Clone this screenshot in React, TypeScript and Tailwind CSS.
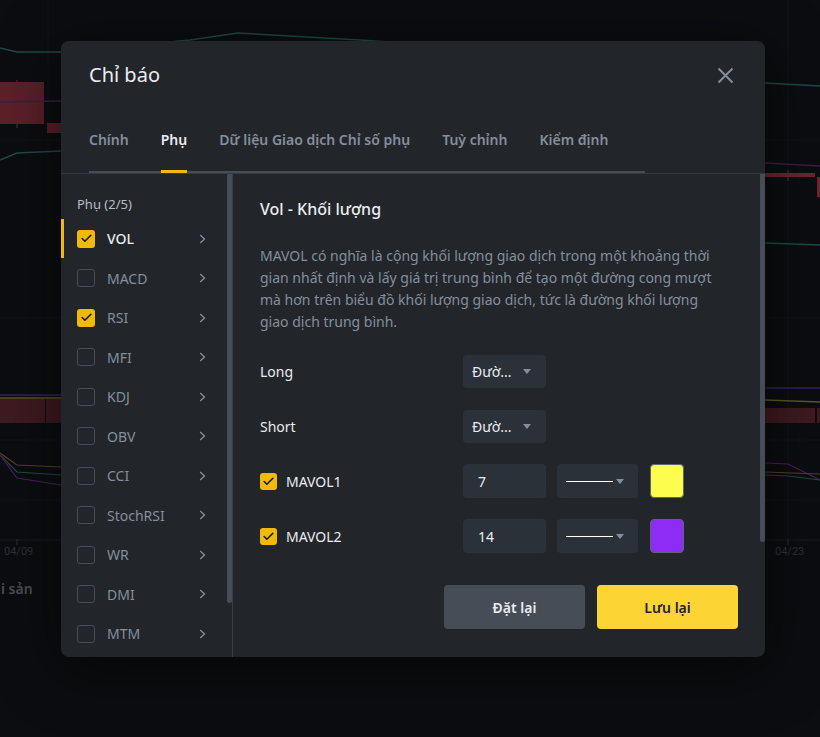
import { Check } from 'lucide-react'

const items = [
  { name: 'VOL', checked: true, active: true },
  { name: 'MACD', checked: false },
  { name: 'RSI', checked: true },
  { name: 'MFI', checked: false },
  { name: 'KDJ', checked: false },
  { name: 'OBV', checked: false },
  { name: 'CCI', checked: false },
  { name: 'StochRSI', checked: false },
  { name: 'WR', checked: false },
  { name: 'DMI', checked: false },
  { name: 'MTM', checked: false },
]

const tabs = ['Chính', 'Phụ', 'Dữ liệu Giao dịch Chỉ số phụ', 'Tuỳ chỉnh', 'Kiểm định']

function ChartBackground() {
  return (
    <svg className="absolute inset-0" width="820" height="737" viewBox="0 0 820 737">
      <rect width="820" height="737" fill="#0b0d10" />
      {/* faint grid */}
      <g stroke="#12151a" strokeWidth="1">
        <line x1="0" y1="140" x2="820" y2="140" />
        <line x1="0" y1="318" x2="820" y2="318" />
        <line x1="0" y1="440" x2="820" y2="440" />
        <line x1="0" y1="500" x2="820" y2="500" />
        <line x1="48" y1="0" x2="48" y2="540" />
        <line x1="788" y1="0" x2="788" y2="540" />
      </g>
      <line x1="0" y1="540" x2="820" y2="540" stroke="#1a1d22" />
      {/* top teal line */}
      <polyline points="0,48 17,52 61,52 190,40 238,33 360,40 420,44" fill="none" stroke="#1f4a4a" strokeWidth="1.5" />
      <polyline points="765,83 820,86" fill="none" stroke="#1f4a4a" strokeWidth="1.5" />
      {/* left candles */}
      <line x1="17" y1="80" x2="17" y2="128" stroke="#6e2530" />
      <rect x="0" y="82" width="44" height="42" fill="#5c2029" />
      <rect x="47" y="123" width="14" height="10" fill="#5c2029" />
      <line x1="0" y1="102" x2="61" y2="101" stroke="#3e1d4a" strokeWidth="1.5" />
      <polyline points="0,160 17,153 61,151" fill="none" stroke="#1f4a4a" strokeWidth="1.5" />
      {/* right candles */}
      <line x1="765" y1="163" x2="820" y2="166" stroke="#3e1d4a" strokeWidth="1.5" />
      <rect x="765" y="173" width="50" height="4" fill="#6e2530" />
      <line x1="788" y1="170" x2="788" y2="181" stroke="#6e2530" />
      <rect x="817" y="177" width="3" height="20" fill="#6e2530" />
      <line x1="765" y1="243" x2="820" y2="245" stroke="#1f4a4a" strokeWidth="1.5" />
      {/* volume area */}
      <line x1="0" y1="395" x2="61" y2="395" stroke="#3a1f6e" strokeWidth="1.5" />
      <line x1="765" y1="388" x2="820" y2="388" stroke="#3a1f6e" strokeWidth="1.5" />
      <line x1="0" y1="398" x2="61" y2="398" stroke="#5d5a1e" strokeWidth="1.5" />
      <line x1="765" y1="400" x2="820" y2="402" stroke="#5d5a1e" strokeWidth="1.5" />
      <rect x="0" y="399" width="45" height="24" fill="#3f1a21" />
      <rect x="46" y="399" width="15" height="24" fill="#3f1a21" />
      <rect x="765" y="408" width="50" height="15" fill="#3f1a21" />
      <rect x="817" y="408" width="3" height="15" fill="#3f1a21" />
      {/* lower lines */}
      <polyline points="0,453 17,465 61,467" fill="none" stroke="#5a4020" strokeWidth="1.2" />
      <polyline points="0,455 17,472 61,475" fill="none" stroke="#1f4a4a" strokeWidth="1.2" />
      <polyline points="0,455 17,478 61,485" fill="none" stroke="#4a1f5a" strokeWidth="1.2" />
      <polyline points="765,463 788,464 820,480" fill="none" stroke="#4a1f5a" strokeWidth="1.2" />
      <polyline points="765,472 820,474" fill="none" stroke="#5a4020" strokeWidth="1.2" />
      <polyline points="765,475 788,476 820,480" fill="none" stroke="#1f4a4a" strokeWidth="1.2" />
      {/* axis */}
      <line x1="17" y1="539" x2="17" y2="545" stroke="#2a2e34" />
      <line x1="788" y1="539" x2="788" y2="545" stroke="#2a2e34" />
      <text x="4" y="555" fill="#2e3238" fontSize="11" fontFamily="Roboto, sans-serif">04/09</text>
      <text x="775" y="555" fill="#2e3238" fontSize="11" fontFamily="Roboto, sans-serif">04/23</text>
      <text x="1" y="594" fill="#4a4f57" fontSize="14" fontWeight="600" fontFamily="'Noto Sans', sans-serif">i sản</text>
    </svg>
  )
}

function Caret() {
  return (
    <svg width="8" height="5" viewBox="0 0 8 5">
      <path d="M0 0h8L4 5z" fill="#848e9c" />
    </svg>
  )
}

function Chevron() {
  return (
    <svg width="7" height="10" viewBox="0 0 7 10" fill="none">
      <path d="M1.2 1 5.5 5 1.2 9" stroke="#848e9c" strokeWidth="1.3" />
    </svg>
  )
}

function Box({ checked, size }: { checked: boolean; size: 'lg' | 'sm' }) {
  const dim = size === 'lg' ? 'w-[18px] h-[18px]' : 'w-[17px] h-[17px]'
  if (checked) {
    return (
      <div className={`${dim} rounded-[3px] bg-[#f0b90b] flex items-center justify-center shrink-0`}>
        <Check size={13} strokeWidth={3} color="#181a20" />
      </div>
    )
  }
  return <div className={`${dim} rounded-[3px] border border-[#474d57] shrink-0`} />
}

function SettingRow({ children, label }: { children: React.ReactNode; label: React.ReactNode }) {
  return (
    <div className="flex items-center h-[34px]">
      <div className="w-[203px] flex items-center text-[14px] text-[#eaecef]">{label}</div>
      {children}
    </div>
  )
}

function LineSelect() {
  return (
    <div className="ml-[11px] w-[81px] h-[34px] rounded-[4px] bg-[#2b3139] flex items-center pl-[9px] pr-[14px] justify-between">
      <div className="w-[47px] h-px bg-white" />
      <Caret />
    </div>
  )
}

export default function App() {
  return (
    <div className="relative w-[820px] h-[737px] overflow-hidden font-['Noto_Sans',sans-serif]">
      <ChartBackground />

      <div className="absolute left-[61px] top-[41px] w-[704px] h-[616px] rounded-[8px] bg-[#22262b] flex flex-col shadow-[0_10px_60px_rgba(0,0,0,0.6)] overflow-hidden">
        <div className="border-b border-[#33383f]">
          <div className="pt-[20px] pl-7 pr-[31px] flex items-center justify-between h-[48px] box-border">
            <div className="text-[20px] leading-[28px] text-[#eaecef]">Chỉ báo</div>
            <svg width="17" height="17" viewBox="0 0 17 17" fill="none">
              <path d="M1.5 1.5 15.5 15.5M15.5 1.5 1.5 15.5" stroke="#848e9c" strokeWidth="2" />
            </svg>
          </div>
          <div className="mt-[41px] ml-7 w-[556px] border-b-2 border-[#474d57] flex gap-8">
            {tabs.map((t) => (
              <div
                key={t}
                className={`relative pb-[21px] text-[14px] leading-[20px] font-semibold ${
                  t === 'Phụ' ? 'text-[#eaecef]' : 'text-[#848e9c]'
                }`}
              >
                {t}
                {t === 'Phụ' && <div className="absolute left-0 right-0 bottom-[-2px] h-[3px] bg-[#f0b90b]" />}
              </div>
            ))}
          </div>
        </div>

        <div className="flex flex-1 min-h-0">
          {/* left list */}
          <div className="flex w-[172px] border-r border-[#3a3f47] shrink-0">
            <div className="w-[166px] pt-[22px]">
              <div className="pl-4 text-[13px] leading-[16px] text-[#b7bdc6]">Phụ (2/5)</div>
              <div className="mt-[7px]">
                {items.map((it) => (
                  <div key={it.name} className="relative h-[39.5px] flex items-center pl-4 pr-[21px]">
                    {it.active && <div className="absolute left-0 top-0 bottom-[1px] w-[3px] bg-[#f0b90b]" />}
                    <Box checked={it.checked} size="lg" />
                    <div
                      className={`ml-3 flex-1 text-[14px] ${
                        it.active ? 'text-[#eaecef] font-medium' : 'text-[#848e9c]'
                      }`}
                    >
                      {it.name}
                    </div>
                    <Chevron />
                  </div>
                ))}
              </div>
            </div>
            <div className="w-[5px]">
              <div className="h-[429px] w-[5px] rounded-b-[3px] bg-[#474d57]" />
            </div>
          </div>

          {/* right panel */}
          <div className="flex flex-1 min-w-0">
            <div className="flex-1 pl-[27px] pr-[22px] pt-[23px]">
              <div className="text-[16px] leading-[24px] font-medium text-[#eaecef]">Vol - Khối lượng</div>
              <p className="mt-[24px] w-[466px] text-[14px] leading-[22px] text-[#848e9c]">
                MAVOL có nghĩa là cộng khối lượng giao dịch trong một khoảng thời gian nhất định và lấy giá trị
                trung bình để tạo một đường cong mượt mà hơn trên biểu đồ khối lượng giao dịch, tức là đường
                khối lượng giao dịch trung bình.
              </p>

              <div className="mt-[21px] flex flex-col gap-[21px]">
                <SettingRow label="Long">
                  <div className="w-[83px] h-[33px] rounded-[4px] bg-[#2b3139] flex items-center justify-between pl-[9px] pr-[15px] text-[14px] text-[#eaecef]">
                    Đườ...
                    <Caret />
                  </div>
                </SettingRow>
                <SettingRow label="Short">
                  <div className="w-[83px] h-[33px] rounded-[4px] bg-[#2b3139] flex items-center justify-between pl-[9px] pr-[15px] text-[14px] text-[#eaecef]">
                    Đườ...
                    <Caret />
                  </div>
                </SettingRow>
                <SettingRow
                  label={
                    <>
                      <Box checked size="sm" />
                      <span className="ml-[9px]">MAVOL1</span>
                    </>
                  }
                >
                  <div className="w-[83px] h-[34px] rounded-[4px] bg-[#2b3139] flex items-center pl-[15px] text-[14px] text-[#eaecef]">
                    7
                  </div>
                  <LineSelect />
                  <div className="ml-[12px] w-[34px] h-[34px] rounded-[4px] border border-[#5e6673] bg-[#fdfd4f]" />
                </SettingRow>
                <SettingRow
                  label={
                    <>
                      <Box checked size="sm" />
                      <span className="ml-[9px]">MAVOL2</span>
                    </>
                  }
                >
                  <div className="w-[83px] h-[34px] rounded-[4px] bg-[#2b3139] flex items-center pl-[15px] text-[14px] text-[#eaecef]">
                    14
                  </div>
                  <LineSelect />
                  <div className="ml-[12px] w-[34px] h-[34px] rounded-[4px] border border-[#5e6673] bg-[#8c2cf5]" />
                </SettingRow>
              </div>

              <div className="mt-[32px] flex justify-end gap-3">
                <button className="w-[141px] h-[44px] rounded-[4px] bg-[#474d57] text-[14px] font-semibold text-[#eaecef]">
                  Đặt lại
                </button>
                <button className="w-[141px] h-[44px] rounded-[4px] bg-[#fcd535] text-[14px] font-semibold text-[#1e2329]">
                  Lưu lại
                </button>
              </div>
            </div>
            <div className="w-[5px] shrink-0">
              <div className="h-[368px] w-[5px] rounded-b-[3px] bg-[#474d57]" />
            </div>
          </div>
        </div>
      </div>
    </div>
  )
}
